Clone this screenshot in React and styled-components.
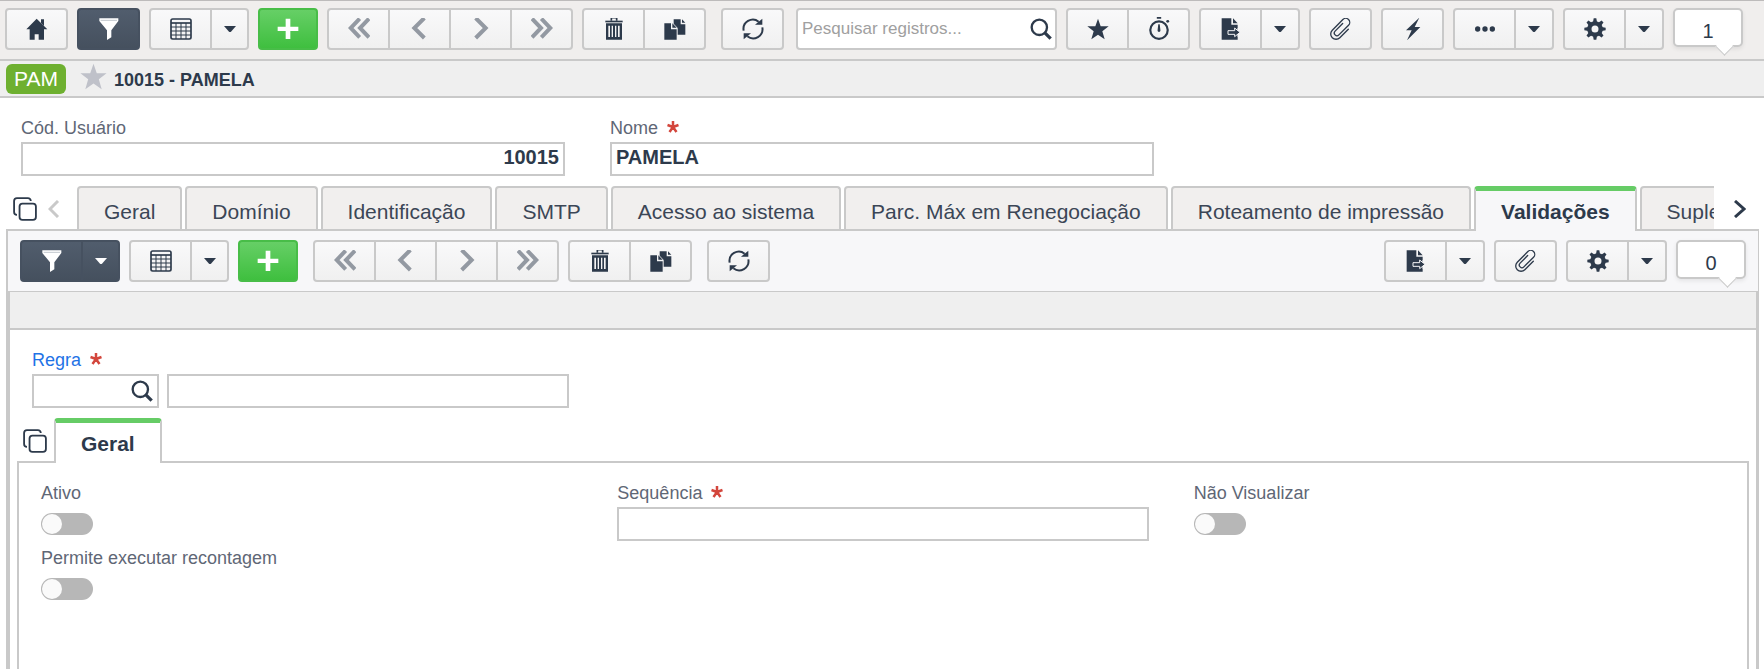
import React, { useState } from "react";
import styled, { createGlobalStyle, css } from "styled-components";

const ink = "#2d3a4b";
const line = "#c9c9c9";

const GlobalStyle = createGlobalStyle`
  *, *::before, *::after { box-sizing: border-box; }
  body {
    margin: 0;
    background: #fff;
    color: ${ink};
    font-family: "Liberation Sans", Arial, sans-serif;
    font-size: 18px;
  }
  button, input { font: inherit; color: inherit; margin: 0; }
  button { cursor: pointer; }
  svg { display: block; flex: none; }
`;

/* ---------- icons ---------- */

const Svg = ({ size = 22, children, ...rest }) => (
  <svg width={size} height={size} viewBox="0 0 66 66" fill="currentColor" aria-hidden="true" {...rest}>
    {children}
  </svg>
);

const HomeIcon = () => (
  <Svg>
    <path d="M32 2 L64 34 H54 V65 H38 V49 H26 V65 H11 V34 H1 Z" />
    <path d="M45 4 H54 V24 L45 15 Z" />
  </Svg>
);
const FilterIcon = () => (
  <Svg>
    <path d="M4 1 H61 V9 L40 37 V58 L27 66 V37 L4 9 Z" />
    <path d="M8 7 H57" stroke="#a3aab3" strokeWidth="2" />
  </Svg>
);
const TableIcon = () => (
  <Svg fill="none" stroke="currentColor">
    <rect x="3" y="3" width="60" height="60" rx="5" strokeWidth="5" />
    <path d="M3 15 H63" strokeWidth="5" />
    <path d="M3 27 H63 M3 39 H63 M3 51 H63 M18 15 V63 M33 15 V63 M48 15 V63" strokeWidth="3" />
  </Svg>
);
const CaretIcon = () => (
  <svg width="12" height="6" viewBox="0 0 36 18" fill="currentColor" aria-hidden="true">
    <path d="M0 0 H36 L21 17 Q18 19 15 17 Z" />
  </svg>
);
const PlusIcon = () => (
  <Svg>
    <path d="M26 2 H40 V26 H64 V39 H40 V63 H26 V39 H2 V26 H26 Z" />
  </Svg>
);
const chevron = { fill: "none", stroke: "#9399a2", strokeWidth: 12 };
const FirstIcon = () => (
  <Svg {...chevron}>
    <path d="M35 2 L8 30 L35 58 M63 2 L36 30 L63 58" />
  </Svg>
);
const PrevIcon = () => (
  <Svg {...chevron}>
    <path d="M46 0 L16 30 L46 60" />
  </Svg>
);
const NextIcon = () => (
  <Svg {...chevron}>
    <path d="M17 0 L47 30 L17 60" />
  </Svg>
);
const LastIcon = () => (
  <Svg {...chevron}>
    <path d="M3 2 L30 30 L3 58 M31 2 L58 30 L31 58" />
  </Svg>
);
const TrashIcon = () => (
  <Svg>
    <path d="M25 8 V1 Q25 -1 27 -1 H39 Q41 -1 41 1 V8" fill="none" stroke="currentColor" strokeWidth="5" />
    <path d="M7 8 H59 V13 H7 Z" />
    <path
      fillRule="evenodd"
      d="M9 16 H57 V65 H9 Z M16 23 H21 V57 H16 Z M26 23 H30 V57 H26 Z M36 23 H40 V57 H36 Z M45 23 H50 V57 H45 Z"
    />
  </Svg>
);
const DocsIcon = () => (
  <Svg>
    <path d="M29 4 H50 V19 H64 V50 H41 V30 L29 17 Z M54 4 L64 14 H54 Z" />
    <path d="M1 16 H21 V34 H38 V65 H1 Z M25 16 L38 29 H25 Z" />
  </Svg>
);
const RefreshIcon = () => (
  <Svg fill="none" stroke="currentColor" strokeWidth="6">
    <path d="M5 38 A28 28 0 0 1 50 11" />
    <path d="M61 28 A28 28 0 0 1 16 55" />
    <path d="M61 2 V20 H39 Z M5 64 V46 H27 Z" fill="currentColor" stroke="none" />
  </Svg>
);
const SearchIcon = () => (
  <Svg fill="none" stroke="currentColor">
    <circle cx="28" cy="28" r="23" strokeWidth="7" />
    <path d="M44 44 L62 62" strokeWidth="10" />
  </Svg>
);
const StarShape = "M33 2 L41 25 L65 25 L46 40 L53 64 L33 50 L13 64 L20 40 L1 25 L25 25 Z";
const StarIcon = ({ size }) => (
  <Svg size={size}>
    <path d={StarShape} />
  </Svg>
);
const TimerIcon = () => (
  <Svg size={24}>
    <circle cx="33" cy="36" r="24" fill="none" stroke="currentColor" strokeWidth="6" />
    <path d="M27 -1 H39 V5 H27 Z M31 20 H35 L37 37 A4 4 0 0 1 29 37 Z" />
    <circle cx="57" cy="12" r="4" />
  </Svg>
);
const ExportIcon = () => (
  <Svg>
    <path d="M5 1 H34 V20 H53 V65 H5 Z M39 1 L53 16 H39 Z" />
    <path
      d="M24 38 H44 V30 L60 43 L44 56 V49 H24 Z"
      stroke="#f6f6f7"
      strokeWidth="3"
    />
    <path d="M56 30 V38 M56 48 V56" stroke="#f6f6f7" strokeWidth="7" />
  </Svg>
);
const ClipIcon = () => (
  <Svg fill="none" stroke="currentColor" strokeWidth="4" strokeLinecap="round">
    <path d="M49 18 V54 A16 16 0 0 1 17 54 V9 A12 12 0 0 1 41 9 V50 A8 8 0 0 1 25 50 V18" transform="rotate(45 33 33)" />
  </Svg>
);
const BoltIcon = () => (
  <Svg>
    <path d="M52 -1 L12 37 H29 L15 67 L55 27 H38 Z" />
  </Svg>
);
const DotsIcon = () => (
  <Svg>
    <circle cx="11" cy="33" r="8" />
    <circle cx="33" cy="33" r="8" />
    <circle cx="55" cy="33" r="8" />
  </Svg>
);
const GearIcon = () => (
  <Svg>
    <circle cx="33" cy="33" r="17" fill="none" stroke="currentColor" strokeWidth="13" />
    {[0, 45, 90, 135, 180, 225, 270, 315].map((a) => (
      <path key={a} d="M27 13 L29 1 H37 L39 13 Z" transform={`rotate(${a} 33 33)`} />
    ))}
  </Svg>
);
const CopyIcon = () => (
  <Svg size={24} fill="none" stroke="currentColor" strokeWidth="5">
    <rect x="18" y="18" width="45" height="45" rx="8" />
    <path d="M11 49 Q3 49 3 41 V11 Q3 3 11 3 H41 Q48 3 49 11" />
  </Svg>
);
const SlimPrevIcon = () => (
  <svg width="12" height="18" viewBox="0 0 12 18" fill="none" stroke="#c9c9c9" strokeWidth="3" aria-hidden="true">
    <path d="M10 1 L2 9 L10 17" />
  </svg>
);
const SlimNextIcon = () => (
  <svg width="12" height="18" viewBox="0 0 12 18" fill="none" stroke="currentColor" strokeWidth="3" aria-hidden="true">
    <path d="M1 1 L10 9 L1 17" />
  </svg>
);
const AsteriskIcon = () => (
  <svg width="12" height="16" viewBox="0 0 24 32" fill="none" stroke="#d3463c" strokeWidth="5" aria-hidden="true">
    <path d="M12 14 V2 M12 14 L23 10 M12 14 L19 24 M12 14 L5 24 M12 14 L1 10" />
  </svg>
);

/* ---------- toolbar ---------- */

const TopBar = styled.header`
  display: flex;
  align-items: flex-start;
  gap: 9px;
  padding: 7px 21px 9px 5px;
  background: #f0eeed;
  border-top: 1px solid #bdbbbb;
  border-bottom: 2px solid ${line};
`;

const PanelBar = styled.div`
  display: flex;
  align-items: flex-start;
  gap: 9px;
  padding: 9px 12px;
  background: #f7f7f9;
  border-bottom: 1px solid ${line};
`;

const Group = styled.div`
  display: flex;
  flex: none;
  margin-left: ${(p) => (p.$apart ? 6 : 0)}px;
  > button + button { margin-left: -2px; }
  > button:not(:first-child) { border-top-left-radius: 0; border-bottom-left-radius: 0; }
  > button:not(:last-child) { border-top-right-radius: 0; border-bottom-right-radius: 0; }
`;

const tones = {
  light: css`
    border-color: ${line};
    background: linear-gradient(#f9f9fa, #f0f0f0);
  `,
  dark: css`
    border-color: #465160;
    background: linear-gradient(#515d6d, #45505e);
    color: #fff;
  `,
  green: css`
    border-color: #48bd48;
    background: linear-gradient(#66cf66, #3fbf3f);
    color: #fff;
  `,
};

const ToolButton = styled.button`
  display: flex;
  align-items: center;
  justify-content: center;
  width: ${(p) => p.$width || 63}px;
  height: 42px;
  padding: 0;
  border: 2px solid;
  border-radius: 4px;
  ${(p) => tones[p.$tone || "light"]}
`;

const Spacer = styled.div`
  flex: 1;
`;

const SearchBox = styled.div`
  display: flex;
  align-items: center;
  flex: 1;
  min-width: 120px;
  height: 42px;
  margin-left: 3px;
  padding: 0 3px 0 4px;
  background: #fff;
  border: 2px solid ${line};
  border-radius: 4px;
`;

const SearchInput = styled.input`
  flex: 1;
  min-width: 0;
  border: 0;
  padding: 0;
  outline: 0;
  background: transparent;
  font-size: ${(p) => (p.$strong ? 18 : 17)}px;
  &::placeholder { color: #a0a0a0; opacity: 1; }
`;

const PlainButton = styled.button`
  display: flex;
  padding: 0;
  border: 0;
  background: none;
`;

const Counter = styled.output`
  position: relative;
  flex: none;
  width: 70px;
  height: 39px;
  padding-top: 4px;
  line-height: 34px;
  text-align: center;
  font-size: 20px;
  background: #fff;
  border: 2px solid ${line};
  border-radius: 5px;
  box-shadow: 0 2px 4px rgba(0, 0, 0, 0.08);
  &::after {
    content: "";
    position: absolute;
    right: 10px;
    bottom: -8px;
    width: 13px;
    height: 13px;
    background: #fff;
    border: solid ${line};
    border-width: 0 1px 1px 0;
    transform: rotate(45deg);
  }
`;

const Tool = ({ label, icon: Icon, tone, width }) => (
  <ToolButton type="button" aria-label={label} title={label} $tone={tone} $width={width}>
    <Icon />
  </ToolButton>
);

const Navigation = ({ apart }) => (
  <Group $apart={apart}>
    <Tool label="Primeiro" icon={FirstIcon} />
    <Tool label="Anterior" icon={PrevIcon} />
    <Tool label="Próximo" icon={NextIcon} />
    <Tool label="Último" icon={LastIcon} />
  </Group>
);

const RecordActions = () => (
  <>
    <Group>
      <Tool label="Excluir" icon={TrashIcon} />
      <Tool label="Duplicar" icon={DocsIcon} />
    </Group>
    <Group $apart>
      <Tool label="Atualizar" icon={RefreshIcon} />
    </Group>
  </>
);

const WithMenu = ({ label, icon, tone, caret = 40 }) => (
  <Group>
    <Tool label={label} icon={icon} tone={tone} />
    <Tool label={`${label}: opções`} icon={CaretIcon} tone={tone} width={caret} />
  </Group>
);

/* ---------- record heading ---------- */

const RecordBar = styled.div`
  display: flex;
  align-items: center;
  height: 37px;
  padding: 0 6px;
  background: #efefef;
  border-bottom: 2px solid ${line};
`;

const Tag = styled.span`
  padding: 0 8px;
  border-radius: 6px;
  background: #6eb030;
  color: #fff;
  font-size: 21px;
  line-height: 30px;
`;

const Favorite = styled(PlainButton)`
  margin: 0 7px 4px 14px;
  color: #bfc1c9;
`;

const RecordTitle = styled.h1`
  margin: 0;
  padding-top: 2px;
  font-size: 18px;
  line-height: 24px;
`;

/* ---------- fields ---------- */

const Page = styled.div`
  display: flex;
  flex-direction: column;
  min-height: 100vh;
`;

const FieldGrid = styled.div`
  display: grid;
  grid-template-columns: repeat(3, 1fr);
  gap: 7px 45px;
  padding: ${(p) => p.$pad};
`;

const FieldBox = styled.div`
  display: flex;
  flex-direction: column;
  gap: 4px;
  grid-column: ${(p) => p.$column || "auto"};
`;

const Label = styled.label`
  display: flex;
  align-items: center;
  gap: 9px;
  font-size: 18px;
  line-height: 20px;
  color: ${(p) => (p.$link ? "#1f73e6" : "#5f6776")};
`;

const TextInput = styled.input`
  width: ${(p) => (p.$width ? `${p.$width}px` : "100%")};
  height: 34px;
  padding: 0 4px 3px;
  border: 2px solid ${line};
  border-radius: 0;
  outline: 0;
  background: #fff;
  font-size: 20px;
  font-weight: bold;
  text-align: ${(p) => p.$align || "left"};
`;

const LookupRow = styled.div`
  display: flex;
  gap: 8px;
`;

const LookupBox = styled.div`
  display: flex;
  align-items: center;
  width: 127px;
  height: 34px;
  padding: 0 4px;
  border: 2px solid ${line};
  background: #fff;
`;

const SwitchSlot = styled.div`
  display: flex;
  align-items: center;
  height: 34px;
`;

const Switch = styled.input.attrs({ type: "checkbox", role: "switch" })`
  appearance: none;
  width: 52px;
  height: 22px;
  border-radius: 11px;
  background: #b7b7b7;
  cursor: pointer;
  &::before {
    content: "";
    display: block;
    width: 20px;
    height: 20px;
    margin: 1px;
    border-radius: 10px;
    background: #fafafa;
  }
  &:checked { background: #66cc66; }
  &:checked::before { margin-left: 31px; }
`;

const Field = ({ id, label, required, link, column, children }) => (
  <FieldBox $column={column}>
    <Label htmlFor={id} $link={link}>
      {label}
      {required && <AsteriskIcon />}
    </Label>
    {children}
  </FieldBox>
);

const SwitchField = ({ id, label, column }) => (
  <Field id={id} label={label} column={column}>
    <SwitchSlot>
      <Switch id={id} />
    </SwitchSlot>
  </Field>
);

/* ---------- tabs ---------- */

const TabRow = styled.div`
  display: flex;
  align-items: center;
  position: relative;
  z-index: 1;
  height: 45px;
  margin-bottom: -2px;
  padding: 0 ${(p) => p.$end}px 0 13px;
`;

const TabScroll = styled.div`
  display: flex;
  align-items: flex-start;
  flex: 1;
  gap: 3px;
  min-width: 0;
  height: 45px;
  margin: 0 ${(p) => p.$after}px 0 ${(p) => p.$before}px;
  overflow: hidden;
`;

const TabButton = styled.button`
  flex: none;
  height: 43px;
  padding: 6px 25px 0;
  border: 2px solid ${line};
  border-bottom: 0;
  border-radius: 4px 4px 0 0;
  background: #f1efee;
  font-size: 21px;
  line-height: 24px;
  white-space: nowrap;
  color: #3b4656;
  &[aria-selected="true"] {
    height: 45px;
    padding-top: 1px;
    border-top: 5px solid #66cc66;
    background: ${(p) => p.$surface};
    font-weight: bold;
    color: ${ink};
  }
`;

const CopyTabs = styled(PlainButton)`
  margin-right: ${(p) => p.$gap || 0}px;
`;

/* ---------- panels ---------- */

const DetailPanel = styled.section`
  display: flex;
  flex-direction: column;
  flex: 1;
  margin: 0 5px 0 6px;
  border: solid ${line};
  border-width: 2px 1px 0 2px;
`;

const DetailBody = styled.div`
  flex: 1;
  display: flex;
  flex-direction: column;
  border: solid ${line};
  border-width: 0 2px;
`;

const InfoStrip = styled.div`
  height: 38px;
  background: #efefef;
  border-bottom: 2px solid ${line};
`;

const RuleArea = styled.div`
  padding: 20px 22px 10px;
`;

const InnerPanel = styled.section`
  flex: 1;
  margin: 0 7px;
  border: 2px solid ${line};
  border-bottom: 0;
`;

const TABS = [
  "Geral",
  "Domínio",
  "Identificação",
  "SMTP",
  "Acesso ao sistema",
  "Parc. Máx em Renegociação",
  "Roteamento de impressão",
  "Validações",
  "Suplementar",
];

export default function App() {
  const [tab, setTab] = useState("Validações");

  return (
    <Page>
      <GlobalStyle />
      <TopBar>
        <Tool label="Início" icon={HomeIcon} />
        <Tool label="Filtro" icon={FilterIcon} tone="dark" />
        <WithMenu label="Grade" icon={TableIcon} caret={39} />
        <Tool label="Adicionar" icon={PlusIcon} tone="green" width={60} />
        <Navigation />
        <RecordActions />
        <SearchBox>
          <SearchInput type="search" aria-label="Pesquisar registros" placeholder="Pesquisar registros..." />
          <PlainButton type="button" aria-label="Pesquisar">
            <SearchIcon />
          </PlainButton>
        </SearchBox>
        <Group>
          <Tool label="Favoritos" icon={StarIcon} />
          <Tool label="Recentes" icon={TimerIcon} />
        </Group>
        <WithMenu label="Exportar" icon={ExportIcon} />
        <Tool label="Anexos" icon={ClipIcon} />
        <Tool label="Ações" icon={BoltIcon} />
        <WithMenu label="Mais" icon={DotsIcon} />
        <WithMenu label="Configurações" icon={GearIcon} />
        <Counter>1</Counter>
      </TopBar>

      <RecordBar>
        <Tag>PAM</Tag>
        <Favorite type="button" aria-label="Favoritar registro">
          <StarIcon size={27} />
        </Favorite>
        <RecordTitle>10015 - PAMELA</RecordTitle>
      </RecordBar>

      <FieldGrid $pad="20px 21px 10px">
        <Field id="codigo" label="Cód. Usuário">
          <TextInput id="codigo" defaultValue="10015" $align="right" />
        </Field>
        <Field id="nome" label="Nome" required>
          <TextInput id="nome" defaultValue="PAMELA" />
        </Field>
      </FieldGrid>

      <TabRow $end={18}>
        <CopyTabs type="button" aria-label="Copiar abas" $gap={11}>
          <CopyIcon />
        </CopyTabs>
        <PlainButton type="button" aria-label="Abas anteriores">
          <SlimPrevIcon />
        </PlainButton>
        <TabScroll role="tablist" $before={17} $after={20}>
          {TABS.map((name) => (
            <TabButton
              key={name}
              type="button"
              role="tab"
              aria-selected={name === tab}
              onClick={() => setTab(name)}
              $surface="#f7f7f9"
            >
              {name}
            </TabButton>
          ))}
        </TabScroll>
        <PlainButton type="button" aria-label="Próximas abas">
          <SlimNextIcon />
        </PlainButton>
      </TabRow>

      <DetailPanel>
        <PanelBar>
          <WithMenu label="Filtro" icon={FilterIcon} tone="dark" caret={39} />
          <WithMenu label="Grade" icon={TableIcon} caret={39} />
          <Tool label="Adicionar" icon={PlusIcon} tone="green" width={60} />
          <Navigation apart />
          <RecordActions />
          <Spacer />
          <WithMenu label="Exportar" icon={ExportIcon} />
          <Tool label="Anexos" icon={ClipIcon} />
          <WithMenu label="Configurações" icon={GearIcon} />
          <Counter>0</Counter>
        </PanelBar>
        <DetailBody>
          <InfoStrip />
          <RuleArea>
            <Field id="regra" label="Regra" required link>
              <LookupRow>
                <LookupBox>
                  <SearchInput id="regra" $strong />
                  <PlainButton type="button" aria-label="Buscar regra">
                    <SearchIcon />
                  </PlainButton>
                </LookupBox>
                <TextInput aria-label="Descrição da regra" readOnly $width={402} />
              </LookupRow>
            </Field>
          </RuleArea>
          <TabRow $end={7}>
            <CopyTabs type="button" aria-label="Copiar abas">
              <CopyIcon />
            </CopyTabs>
            <TabScroll role="tablist" $before={7} $after={0}>
              <TabButton type="button" role="tab" aria-selected="true" $surface="#fff">
                Geral
              </TabButton>
            </TabScroll>
          </TabRow>
          <InnerPanel>
            <FieldGrid $pad="20px 22px">
              <SwitchField id="ativo" label="Ativo" />
              <Field id="sequencia" label="Sequência" required>
                <TextInput id="sequencia" />
              </Field>
              <SwitchField id="nao-visualizar" label="Não Visualizar" />
              <SwitchField id="recontagem" label="Permite executar recontagem" column={1} />
            </FieldGrid>
          </InnerPanel>
        </DetailBody>
      </DetailPanel>
    </Page>
  );
}
